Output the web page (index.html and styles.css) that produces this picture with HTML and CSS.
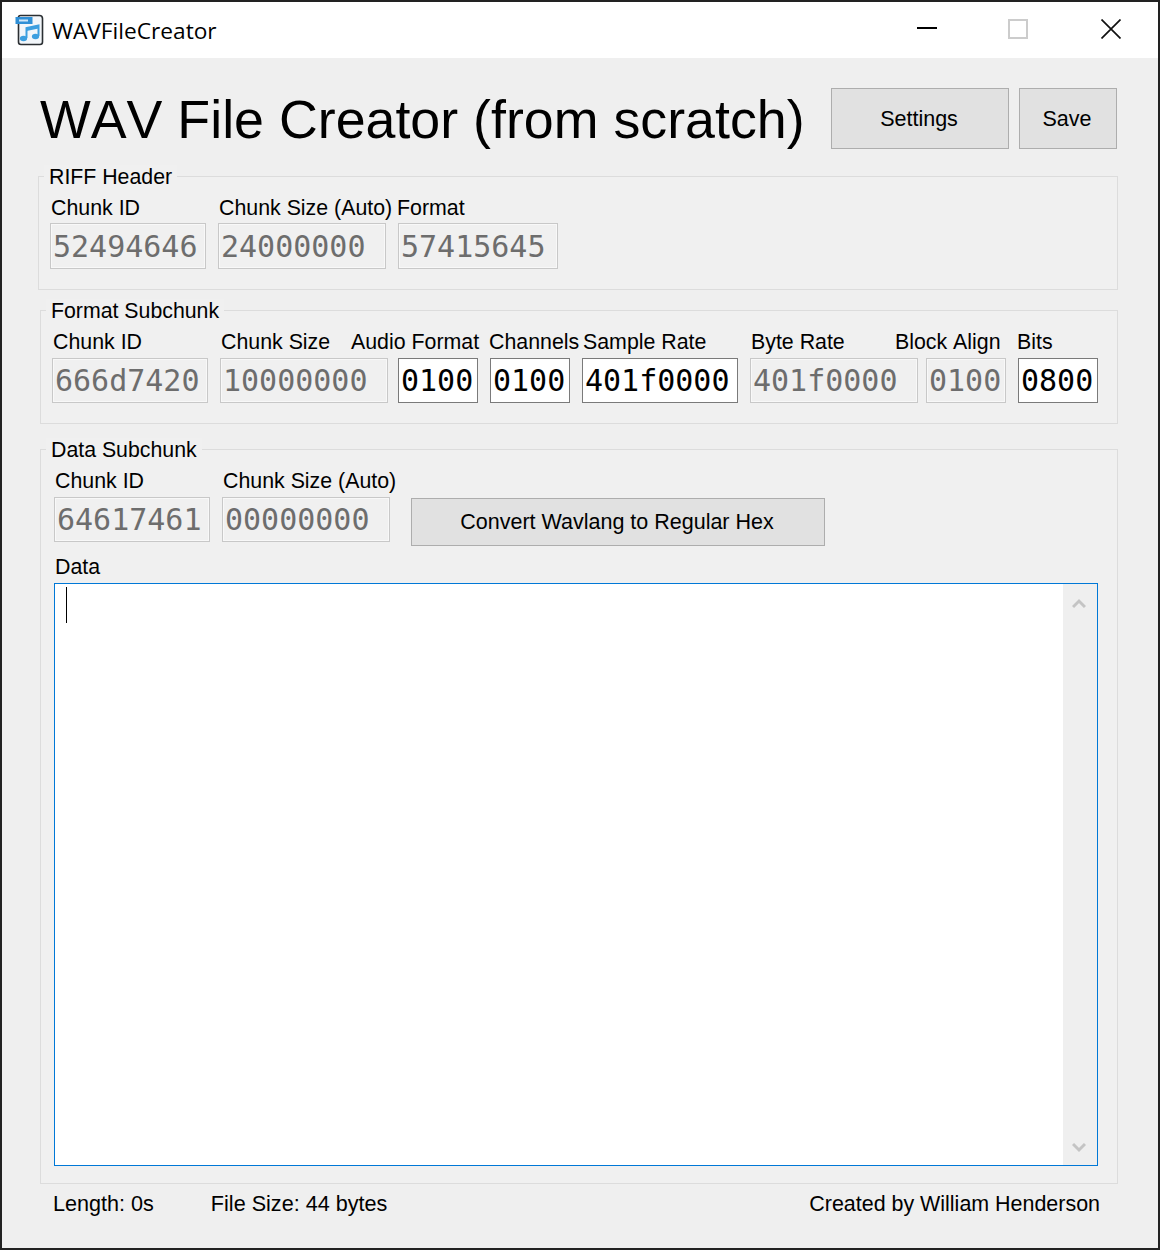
FILE: index.html
```html
<!DOCTYPE html>
<html lang="en">
<head>
<meta charset="utf-8">
<title>WAVFileCreator</title>
<link rel="stylesheet" href="styles.css">
</head>
<body>
<div class="window">
  <header class="titlebar">
    <svg class="app-icon" viewBox="0 0 30 32" width="30" height="32" aria-hidden="true">
      <path d="M3.5 3.5 Q3.5 1.5 5.5 1.5 H24.5 Q27.5 1.5 27.5 4.5 V28 Q27.5 30.5 25 30.5 H6 Q3.5 30.5 3.5 28 Z" fill="#f2f6fa" stroke="#2b2f33" stroke-width="1.6"/>
      <rect x="0.5" y="3" width="17" height="7" fill="#2f8fd6"/>
      <rect x="4" y="5.5" width="9" height="2" fill="#cfe6f7"/>
      <path d="M11.5 24 V14 L23.5 11.5 V22" fill="none" stroke="#3c9fe0" stroke-width="2"/>
      <path d="M11.5 14 L23.5 11.5 V14.5 L11.5 17 Z" fill="#3c9fe0"/>
      <ellipse cx="8.5" cy="24.5" rx="3.6" ry="2.8" fill="#3c9fe0"/>
      <ellipse cx="20.5" cy="22.5" rx="3.6" ry="2.8" fill="#3c9fe0"/>
    </svg>
    <span class="app-name">WAVFileCreator</span>
    <div class="controls">
      <svg class="ctl ctl-min" width="20" height="20" viewBox="0 0 20 20" aria-hidden="true"><path d="M0 9 H20" stroke="#000" stroke-width="2"/></svg>
      <svg class="ctl ctl-max" width="20" height="20" viewBox="0 0 20 20" aria-hidden="true"><rect x="1" y="1" width="18" height="18" fill="none" stroke="#cccccc" stroke-width="2"/></svg>
      <svg class="ctl ctl-close" width="20" height="20" viewBox="0 0 20 20" aria-hidden="true"><path d="M0.5 0.5 L19.5 19.5 M19.5 0.5 L0.5 19.5" stroke="#111" stroke-width="1.7"/></svg>
    </div>
  </header>

  <main class="content">
    <div class="top-row">
      <h1 class="title">WAV File Creator (from scratch)</h1>
      <button class="btn btn-settings" type="button">Settings</button>
      <button class="btn btn-save" type="button">Save</button>
    </div>

    <section class="group group-riff">
      <h2 class="legend">RIFF Header</h2>
      <div class="fields">
        <div class="field w156"><label class="lbl">Chunk ID</label><div class="box off">52494646</div></div>
        <div class="field w168 gap12"><label class="lbl">Chunk Size (Auto)</label><div class="box off">24000000</div></div>
        <div class="field w160 gap12"><label class="lbl lbl-tight">Format</label><div class="box off">57415645</div></div>
      </div>
    </section>

    <section class="group group-format">
      <h2 class="legend">Format Subchunk</h2>
      <div class="fields">
        <div class="field w156"><label class="lbl">Chunk ID</label><div class="box off">666d7420</div></div>
        <div class="field w168 gap12"><label class="lbl">Chunk Size</label><div class="box off">10000000</div></div>
        <div class="field w80 gap10"><label class="lbl lbl-audio">Audio Format</label><div class="box on">0100</div></div>
        <div class="field w80 gap12"><label class="lbl lbl-tight">Channels</label><div class="box on">0100</div></div>
        <div class="field w156 gap12"><label class="lbl">Sample Rate</label><div class="box on">401f0000</div></div>
        <div class="field w168 gap12"><label class="lbl">Byte Rate</label><div class="box off">401f0000</div></div>
        <div class="field w80 gap8"><label class="lbl lbl-block">Block Align</label><div class="box off">0100</div></div>
        <div class="field w80 gap12"><label class="lbl lbl-tight">Bits</label><div class="box on">0800</div></div>
      </div>
    </section>

    <section class="group group-data">
      <h2 class="legend">Data Subchunk</h2>
      <div class="fields">
        <div class="field w156"><label class="lbl">Chunk ID</label><div class="box off">64617461</div></div>
        <div class="field w168 gap12"><label class="lbl">Chunk Size (Auto)</label><div class="box off">00000000</div></div>
        <button class="btn btn-convert" type="button">Convert Wavlang to Regular Hex</button>
      </div>
      <label class="lbl lbl-data">Data</label>
      <div class="editor">
        <div class="editor-text"><span class="caret"></span></div>
        <div class="scrollbar">
          <svg width="14" height="11" viewBox="0 0 14 11" aria-hidden="true"><path d="M1 9 L7 3 L13 9" fill="none" stroke="#c4c4c4" stroke-width="3"/></svg>
          <svg width="14" height="11" viewBox="0 0 14 11" aria-hidden="true"><path d="M1 2 L7 8 L13 2" fill="none" stroke="#c4c4c4" stroke-width="3"/></svg>
        </div>
      </div>
    </section>

    <footer class="status">
      <span class="stat-length">Length: 0s</span>
      <span class="stat-size">File Size: 44 bytes</span>
      <span class="credit">Created by William Henderson</span>
    </footer>
  </main>
</div>
</body>
</html>
```
FILE: styles.css
```css
* { box-sizing: border-box; }
html, body { margin: 0; padding: 0; }
body {
  font-family: "Liberation Sans", Arial, sans-serif;
  font-kerning: none;
  color: #000;
  background: #222;
}
.window {
  width: 1160px;
  height: 1250px;
  border: 2px solid #222;
  background: #efefef;
  display: flex;
  flex-direction: column;
  overflow: hidden;
}
.titlebar {
  height: 56px;
  flex: none;
  background: #fff;
  display: flex;
  align-items: center;
  padding-left: 13px;
}
.app-icon { flex: none; margin-top: -1px; }
.app-name {
  font-family: "Open Sans", "Liberation Sans", sans-serif;
  font-size: 22.7px;
  margin-left: 7px;
  margin-top: 1px;
}
.controls {
  margin-left: auto;
  display: flex;
  align-items: center;
  gap: 71px;
  padding-right: 37px;
  margin-top: -3px;
}
.ctl-close { margin-left: 2px; }
.content {
  flex: 1;
  padding: 30px 0 0 36px;
  display: flex;
  flex-direction: column;
}
.top-row {
  display: flex;
  align-items: flex-start;
  height: 61px;
  margin-bottom: 27px;
}
.title {
  margin: 1px 0 0 2px;
  font-size: 53.75px;
  font-weight: 400;
  line-height: 61px;
  width: 791px;
  white-space: nowrap;
}
.btn {
  font-family: "Liberation Sans", Arial, sans-serif;
  font-size: 21.5px;
  color: #000;
  background: #e1e1e1;
  border: 1px solid #adadad;
  padding: 1px 2px 0 0;
}
.btn-settings { width: 178px; height: 61px; }
.btn-save { width: 98px; height: 61px; margin-left: 10px; }
.btn-convert { width: 414px; height: 48px; margin: 29px 0 0 21px; }
.group {
  position: relative;
  border: 1px solid #dcdcdc;
  background: #f0f0f0;
  width: 1078px;
  margin-left: 2px;
  display: flex;
  flex-direction: column;
  flex: none;
}
.group-riff { width: 1080px; margin-left: 0; height: 114px; padding: 19px 0 0 11px; margin-bottom: 20px; }
.group-format { height: 114px; padding: 19px 0 0 11px; margin-bottom: 25px; }
.group-data { height: 735px; padding: 19px 0 0 13px; }
.legend {
  position: absolute;
  top: -12px;
  left: 5px;
  margin: 0;
  padding: 0 5px;
  font-size: 21.3px;
  font-weight: 400;
  line-height: 24px;
  background: #f0f0f0;
}
.fields { display: flex; align-items: flex-start; }
.field { flex: none; display: flex; flex-direction: column; }
.w156 { width: 156px; }
.w168 { width: 168px; }
.w160 { width: 160px; }
.w80 { width: 80px; }
.gap8 { margin-left: 8px; }
.gap10 { margin-left: 10px; }
.gap12 { margin-left: 12px; }
.lbl {
  display: block;
  font-size: 21.35px;
  line-height: 24px;
  height: 24px;
  margin-left: 1px;
  white-space: nowrap;
}
.lbl-tight { margin-left: -1px; }
.lbl-audio { margin-left: -47px; }
.lbl-block { margin-left: -31px; }
.box {
  height: 45px;
  margin-top: 4px;
  padding-left: 2px;
  font-family: "DejaVu Sans Mono", monospace;
  font-size: 30px;
  line-height: 44px;
  white-space: nowrap;
}
.group-riff .box { height: 46px; margin-top: 3px; line-height: 46px; }
.off {
  background: #f0f0f0;
  border: 1px solid #c8c8c8;
  box-shadow: inset 0 0 0 1px #f8f8f8;
  color: #6d6d6d;
}
.on {
  background: #fff;
  border: 1px solid #7a7a7a;
  color: #000;
}
.lbl-data { margin-top: 9px; height: 28px; }
.editor {
  width: 1044px;
  height: 583px;
  flex: none;
  border: 1px solid #0078d7;
  display: flex;
  background: #fff;
}
.editor-text { flex: 1; padding: 3px 0 0 11px; }
.caret { display: block; width: 1px; height: 36px; background: #000; }
.scrollbar {
  width: 34px;
  background: #efefef;
  display: flex;
  flex-direction: column;
  justify-content: space-between;
  align-items: center;
  padding: 14px 2px 12px 0;
}
.status {
  display: flex;
  font-size: 21.6px;
  line-height: 24px;
  margin-top: 8px;
  padding-left: 15px;
  width: 1062px;
}
.stat-size { margin-left: 57px; }
.credit { margin-left: auto; font-size: 21.45px; }
```
